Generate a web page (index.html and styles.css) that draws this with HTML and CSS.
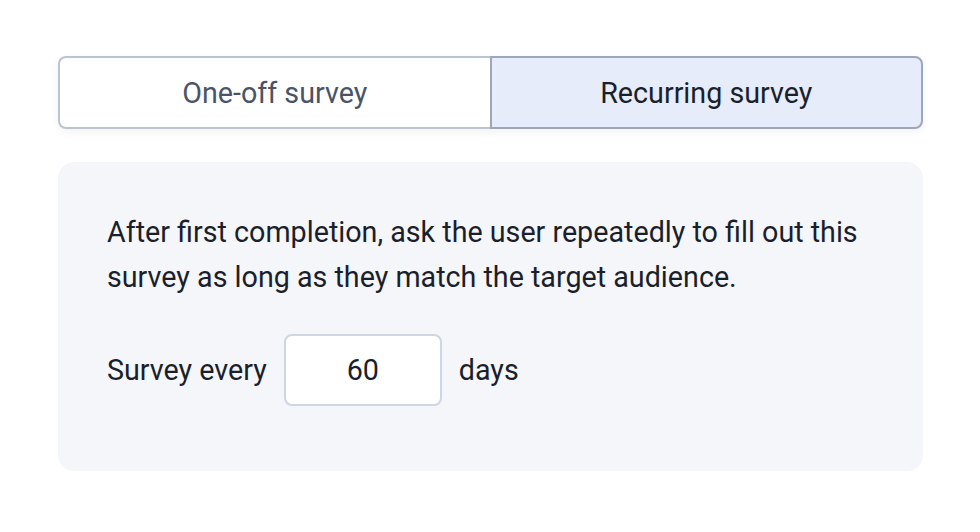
FILE: index.html
```html
<!DOCTYPE html>
<html>
<head>
<meta charset="utf-8">
<link rel="stylesheet" href="styles.css">
</head>
<body>
<div class="wrap">
  <div class="toggle">
    <button class="opt">One-off survey</button>
    <button class="opt active">Recurring survey</button>
  </div>
  <div class="panel">
    <p class="desc">After first completion, ask the user repeatedly to fill out this survey as long as they match the target audience.</p>
    <div class="row">
      <span>Survey every</span>
      <input class="num" type="text" value="60">
      <span>days</span>
    </div>
  </div>
</div>
</body>
</html>
```
FILE: styles.css
```css
html, body {
  margin: 0;
  padding: 0;
  background: #ffffff;
  font-family: Roboto, "Liberation Sans", sans-serif;
}
.wrap {
  padding: 56px 57px 0 58px;
  display: flex;
  flex-direction: column;
  gap: 33px;
}
.toggle {
  display: flex;
  height: 73px;
  border-radius: 8px;
  box-shadow: 0 3px 8px rgba(30, 41, 59, 0.06);
}
.opt {
  flex: 1;
  margin: 0;
  font-family: inherit;
  font-size: 28.7px;
  background: #ffffff;
  color: #4a5468;
  border: 2px solid #bcc4d1;
  cursor: pointer;
}
.opt:first-child {
  border-radius: 8px 0 0 8px;
  border-right: none;
}
.opt.active {
  background: #e6ecf9;
  color: #1a1f2b;
  border-color: #9ea6ba;
  border-radius: 0 8px 8px 0;
}
.panel {
  background: #f5f6fa;
  border-radius: 16px;
  height: 309px;
  box-sizing: border-box;
  padding: 48px 49px 0 49px;
}
.desc {
  margin: 0;
  font-size: 28.7px;
  line-height: 45px;
  color: #1a1f2b;
}
.row {
  display: flex;
  align-items: center;
  gap: 17px;
  margin-top: 34px;
  font-size: 28.7px;
  color: #1a1f2b;
}
.num {
  width: 158px;
  height: 72px;
  box-sizing: border-box;
  border: 2px solid #cfd6e3;
  border-radius: 8px;
  background: #ffffff;
  text-align: center;
  font-family: inherit;
  font-size: 28.7px;
  color: #1a1f2b;
  outline: none;
}
```
